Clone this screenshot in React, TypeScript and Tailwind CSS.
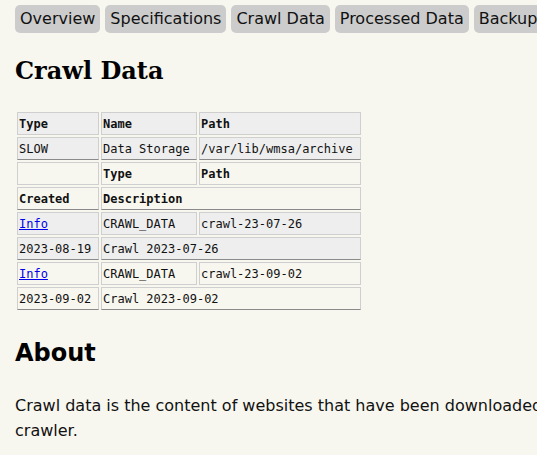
const TABS = ['Overview', 'Specifications', 'Crawl Data', 'Processed Data', 'Backups']

type Cell = { text: string; span?: number; head?: boolean; link?: boolean }

const ROWS: { cells: Cell[]; shaded: boolean; dark: boolean }[] = [
  {
    shaded: true,
    dark: false,
    cells: [
      { text: 'Type', head: true },
      { text: 'Name', head: true },
      { text: 'Path', head: true },
    ],
  },
  {
    shaded: true,
    dark: true,
    cells: [{ text: 'SLOW' }, { text: 'Data Storage' }, { text: '/var/lib/wmsa/archive' }],
  },
  {
    shaded: false,
    dark: false,
    cells: [{ text: '' }, { text: 'Type', head: true }, { text: 'Path', head: true }],
  },
  {
    shaded: false,
    dark: true,
    cells: [
      { text: 'Created', head: true },
      { text: 'Description', head: true, span: 2 },
    ],
  },
  {
    shaded: true,
    dark: false,
    cells: [{ text: 'Info', link: true }, { text: 'CRAWL_DATA' }, { text: 'crawl-23-07-26' }],
  },
  {
    shaded: true,
    dark: true,
    cells: [{ text: '2023-08-19' }, { text: 'Crawl 2023-07-26', span: 2 }],
  },
  {
    shaded: false,
    dark: false,
    cells: [{ text: 'Info', link: true }, { text: 'CRAWL_DATA' }, { text: 'crawl-23-09-02' }],
  },
  {
    shaded: false,
    dark: true,
    cells: [{ text: '2023-09-02' }, { text: 'Crawl 2023-09-02', span: 2 }],
  },
]

export default function App() {
  return (
    <div className="h-[455px] w-[537px] overflow-hidden bg-[#f8f7ef] font-['DejaVu_Sans',sans-serif] text-black">
      <div className="w-[640px] px-[15px]">
        {/* Tab bar */}
        <nav className="flex gap-[5px] whitespace-nowrap pt-[5px]">
          {TABS.map((t) => (
            <a
              key={t}
              className="rounded-[5px] bg-[#cccccc] px-[5px] py-[4px] text-[16px] leading-[20px] text-[#111]"
            >
              {t}
            </a>
          ))}
        </nav>

        <h1 className="mt-[23px] font-['DejaVu_Serif',serif] text-[24px] font-bold leading-[30px]">
          Crawl Data
        </h1>

        <table className="mt-[24px] table-fixed border-separate border-spacing-[2px] font-['DejaVu_Sans_Mono',monospace] text-[12px] text-[#111]">
          <colgroup>
            <col className="w-[82px]" />
            <col className="w-[96px]" />
            <col className="w-[162px]" />
          </colgroup>
          <tbody>
            {ROWS.map((row, i) => (
              <tr key={i}>
                {row.cells.map((c, j) => (
                  <td
                    key={j}
                    colSpan={c.span}
                    className={`h-[23px] border border-[#cfcfcf] px-[1px] pb-0 pt-px align-middle leading-[19px] ${
                      row.dark ? 'border-b-[#8a8a8a]' : ''
                    } ${row.shaded ? 'bg-[#eeeeee]' : ''} ${c.head ? 'font-bold' : ''}`}
                  >
                    {c.link ? (
                      <a className="text-[#0000ee] underline">{c.text}</a>
                    ) : (
                      c.text
                    )}
                  </td>
                ))}
              </tr>
            ))}
          </tbody>
        </table>

        <h2 className="mt-[26px] text-[24px] font-bold leading-[30px]">About</h2>

        <p className="mt-[25px] text-[16px] leading-[25px] text-[#111]">
          Crawl data is the content of websites that have been downloaded by the crawler.
        </p>
      </div>
    </div>
  )
}
